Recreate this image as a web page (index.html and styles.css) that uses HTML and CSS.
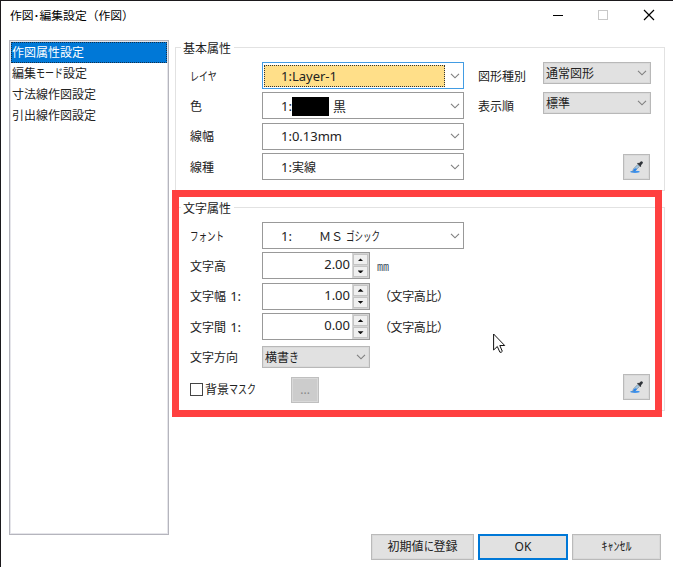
FILE: index.html
```html
<!DOCTYPE html>
<html lang="ja">
<head>
<meta charset="utf-8">
<title>作図･編集設定（作図）</title>
<link rel="stylesheet" href="styles.css">
</head>
<body>
<svg width="0" height="0" class="defs">
  <symbol id="chev" viewBox="0 0 10 6"><path d="M1 .8 5 4.8 9 .8" fill="none" stroke="#808080" stroke-width="1.15"/></symbol>
  <symbol id="drop" viewBox="0 0 14 14">
    <ellipse cx="5" cy="11.8" rx="4.7" ry="1.1" fill="#3c91ed"/>
    <path d="M2.5 11.5 3.5 8.8 7.8 4.5 9.6 6.3 5.3 10.6Z" fill="#a6c5dd" stroke="#6c8295" stroke-width=".6"/>
    <path d="M3 11.3 4 9 6 8.3 7 8.9 5.3 10.9Z" fill="#2783ed"/>
    <path d="M7 3.2 8.1 2.7 9 3.2 10.4 1.7Q11.5 1 12.5 1.7T12.4 3.8L10.9 5.2 11.3 6.1 10.6 7Z" fill="#30343a"/>
  </symbol>
</svg>
<div class="window">
  <header class="titlebar">
    <h1>作図･編集設定（作図）</h1>
    <svg class="sys" width="112" height="14" viewBox="0 0 112 14" fill="none" shape-rendering="crispEdges">
      <path d="M1 7.5h10" stroke="#000"/><rect x="46.500" y="2.500" width="9" height="9" stroke="#c8c8c8"/>
      <path d="M92 2l10 10M102 2 92 12" stroke="#000" stroke-width="1.200" shape-rendering="auto"/>
    </svg>
  </header>
  <main class="content">
    <ul class="pages">
      <li class="selected">作図属性設定</li>
      <li>編集<span class="k3">モード</span>設定</li>
      <li>寸法線作図設定</li>
      <li>引出線作図設定</li>
    </ul>
    <div class="groups">
      <section class="group basic">
        <h2>基本属性</h2>
        <div class="cols">
          <div class="rows">
            <label><span class="k3">レイヤ</span></label><div class="combo focus"><span class="value">1:Layer-1</span><svg><use href="#chev"/></svg></div>
            <label>色</label><div class="combo"><span class="value">1:<i class="swatch"></i>黒</span><svg><use href="#chev"/></svg></div>
            <label>線幅</label><div class="combo"><span class="value">1:0.13mm</span><svg><use href="#chev"/></svg></div>
            <label>線種</label><div class="combo"><span class="value">1:<span class="jp">実線</span></span><svg><use href="#chev"/></svg></div>
          </div>
          <div class="side">
            <label>図形種別</label><div class="select">通常図形<svg><use href="#chev"/></svg></div>
            <label>表示順</label><div class="select">標準<svg><use href="#chev"/></svg></div>
          </div>
        </div>
        <button class="pick"><svg><use href="#drop"/></svg></button>
      </section>
      <section class="group text">
        <h2>文字属性</h2>
        <div class="rows">
          <label><span class="k4">フォント</span></label><div class="combo"><span class="value font">1:<span class="face">ＭＳ <span class="k4">ゴシック</span></span></span><svg><use href="#chev"/></svg></div>
          <label>文字高</label><div class="line"><div class="spin"><span>2.00</span><div class="arrows"><i class="up"></i><i class="down"></i></div></div><span class="mm">㎜</span></div>
          <label>文字幅 <span class="num">1:</span></label><div class="line"><div class="spin"><span>1.00</span><div class="arrows"><i class="up"></i><i class="down"></i></div></div><span class="unit">（文字高比）</span></div>
          <label>文字間 <span class="num">1:</span></label><div class="line"><div class="spin"><span>0.00</span><div class="arrows"><i class="up"></i><i class="down"></i></div></div><span class="unit">（文字高比）</span></div>
          <label>文字方向</label><div class="select">横書<span class="k1">き</span><svg><use href="#chev"/></svg></div>
        </div>
        <div class="mask"><i class="check"></i><span>背景<span class="k3">マスク</span></span><button class="more">...</button></div>
        <button class="pick"><svg><use href="#drop"/></svg></button>
      </section>
    </div>
  </main>
  <footer>
    <button class="wide">初期値<span class="k1">に</span>登録</button>
    <button class="default">OK</button>
    <button>ｷｬﾝｾﾙ</button>
  </footer>
  <div class="highlight"></div>
  <svg class="cursor" viewBox="0 0 13 21"><path d="M.6 1v16l3.700-3.500 2.600 5.700q1.300.7 2.400-.9L6.800 12.500h4.900Z" fill="#fff" stroke="#111" stroke-width="1"/></svg>
</div>
</body>
</html>
```
FILE: styles.css
```css
* { box-sizing: border-box; }
body { margin: 0; background: #fff; color: #222; font: 12px/16px "Noto Sans", "Noto Sans CJK JP", sans-serif; }
h1, h2, ul { margin: 0; padding: 0; font-size: 12px; font-weight: 400; list-style: none; }
button { font: inherit; color: inherit; padding: 0; border: 1px solid #bababa; background: #e1e1e1; outline: 1px solid #d9d9d9; outline-offset: -2px; }
.defs { position: absolute; }
.window { position: relative; width: 673px; height: 567px; overflow: hidden; border: 1px solid #1b191c; border-right: 0; border-bottom: 0; background: #fff; }
.titlebar { display: flex; justify-content: space-between; align-items: center; height: 30px; padding: 0 9px 2px; color: #000; }
.titlebar h1 { font-family: "Noto Sans CJK JP", sans-serif; font-size: 11.8px; white-space: nowrap; }
.content { display: flex; padding: 9px 8px 0; height: 503px; }
.pages { width: 160px; height: 495px; flex: none; border: 1px solid #b5b5bd; padding: 1px; outline: 1px solid #e5e5ea; outline-offset: -2px; }
.pages li { height: 21px; padding: 3px 1px 2px; white-space: nowrap; }
.pages .selected { color: #fff; background: #0078d7; outline: 1px dotted #13304a; outline-offset: -1px; }
.groups { margin: 7px 0 0 6px; width: 490px; }
.group { position: relative; border: 1px solid #e2e2e2; padding: 14px 0 0 14px; }
.basic { height: 144px; }
.text { height: 204px; margin-top: 16px; }
h2 { position: absolute; top: -8px; left: 5px; padding: 0 3px 0 2px; background: #fff; line-height: 17px; }
.cols { display: flex; gap: 14px; }
.rows { display: grid; grid-template-columns: 72px 202px; grid-auto-rows: 27px; row-gap: 3.4px; align-items: center; width: 274px; }
.rows label, .side label { padding-top: 2px; white-space: nowrap; }
.combo { display: flex; align-items: center; justify-content: space-between; height: 27px; border: 1px solid #999; padding: 1px 3px 1px 2px; }
.combo .value { flex: 1; height: 22px; line-height: 23px; padding-left: 16px; font-size: 13px; margin-right: 10px; white-space: nowrap; }
.combo svg, .select svg { width: 10px; height: 6px; flex: none; }
.combo.focus { border-color: #429ce3; }
.focus .value { background: #ffdf89; outline: 1px dotted #333; outline-offset: -1px; margin-right: 5px; margin-left: -1px; padding-left: 17px; }
.swatch { display: inline-block; width: 37px; height: 19px; margin: 0 4px 0 0; background: #000; vertical-align: -5px; }
.jp { font-size: 12px; }
.font .face { margin-left: 27px; font-size: 12px; }
.side { display: grid; grid-template-columns: 65px 108px; grid-auto-rows: 27px; row-gap: 3.4px; align-items: start; }
.side label { padding-top: 7px; }
.select { display: flex; align-items: center; width: 108px; height: 22px; background: #e1e1e1; border: 1px solid #b8b8b8; padding: 1px 3px 0 2px; outline: 1px solid #dadada; outline-offset: -2px; }
.select svg { margin-left: auto; margin-top: -1px; }
.pick { position: absolute; right: 14px; bottom: 10px; width: 27px; height: 26px; display: grid; place-items: center; }
.pick svg { width: 14px; height: 14px; }
.line { display: flex; align-items: center; }
.spin { display: flex; justify-content: space-between; width: 108px; height: 27px; border: 1px solid #999; flex: none; font-size: 13px; }
.spin > span { flex: 1; text-align: right; padding: 3px 2px 0 0; }
.arrows { width: 17px; padding: 1px; display: grid; grid-template-rows: 1fr 1fr; gap: 1px; background: #d4d4d4; }
.arrows i { background: #efefef; border: 1px solid #c4c4c4; display: grid; place-items: center; }
.arrows i::before { content: ""; width: 6px; height: 3px; background: #111; }
.arrows .up::before { clip-path: polygon(50% 0, 100% 100%, 0 100%); }
.arrows .down::before { clip-path: polygon(0 0, 100% 0, 50% 100%); }
.unit { margin-left: 9px; padding-top: 2px; white-space: nowrap; letter-spacing: -.4px; }
.num { font-size: 13px; margin-left: 1px; line-height: 1; }
.mm { margin-left: 7px; padding-top: 2px; color: #394a5c; }
.mask { display: flex; align-items: center; height: 26px; margin-top: 6px; white-space: nowrap; }
.mask .check { width: 13px; height: 13px; border: 1px solid #444; margin-right: 2px; }
.more { width: 28px; height: 26px; margin-left: 35px; color: #888; background: #ccc; border-color: #bfbfbf; }
footer { display: flex; gap: 4px; justify-content: flex-end; padding-right: 12px; }
footer button { width: 89px; height: 26px; }
footer .wide { width: 103px; }
footer .default { width: 90px; border: 2px solid #0078d7; outline: 0; }
.k1, .k3, .k4 { display: inline-block; transform-origin: left; white-space: nowrap; }
.k1 { transform: scaleX(.83); margin-right: -.17em; }
.k3 { transform: scaleX(.75); margin-right: -.75em; }
.k4 { transform: scaleX(.71); margin-right: -1.16em; }
.highlight { position: absolute; left: 171px; top: 189px; width: 490px; height: 227px; border: 7px solid #ff4040; }
.cursor { position: absolute; left: 492px; top: 332px; width: 13px; height: 21px; }
```
